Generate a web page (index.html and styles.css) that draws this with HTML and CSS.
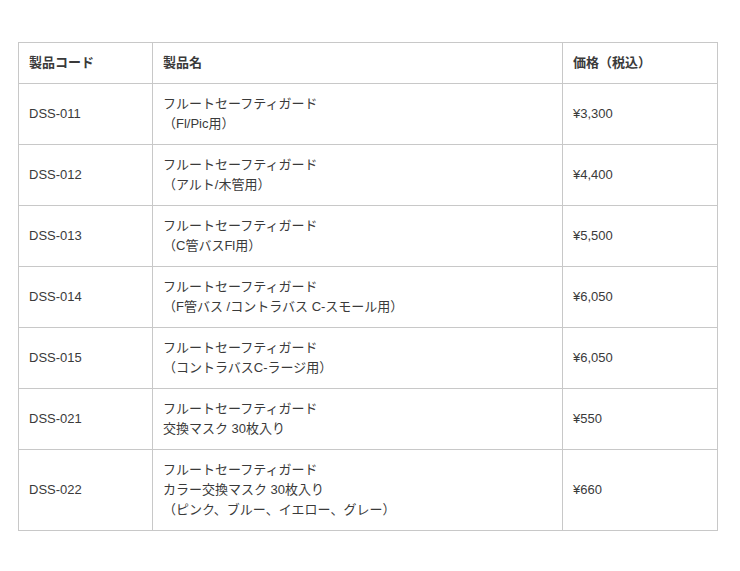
FILE: index.html
```html
<!DOCTYPE html>
<html lang="ja">
<head>
<meta charset="utf-8">
<link rel="stylesheet" href="styles.css">
</head>
<body>
<div class="wrap">
<table class="price-table">
  <colgroup><col class="c1"><col class="c2"><col class="c3"></colgroup>
  <thead>
    <tr><th>製品コード</th><th>製品名</th><th>価格（税込）</th></tr>
  </thead>
  <tbody>
    <tr><td>DSS-011</td><td>フルートセーフティガード<br>（Fl/Pic用）</td><td>¥3,300</td></tr>
    <tr><td>DSS-012</td><td>フルートセーフティガード<br>（アルト/木管用）</td><td>¥4,400</td></tr>
    <tr><td>DSS-013</td><td>フルートセーフティガード<br>（C管バスFl用）</td><td>¥5,500</td></tr>
    <tr><td>DSS-014</td><td>フルートセーフティガード<br>（F管バス /コントラバス C-スモール用）</td><td>¥6,050</td></tr>
    <tr><td>DSS-015</td><td>フルートセーフティガード<br>（コントラバスC-ラージ用）</td><td>¥6,050</td></tr>
    <tr><td>DSS-021</td><td>フルートセーフティガード<br>交換マスク 30枚入り</td><td>¥550</td></tr>
    <tr><td>DSS-022</td><td>フルートセーフティガード<br>カラー交換マスク 30枚入り<br>（ピンク、ブルー、イエロー、グレー）</td><td>¥660</td></tr>
  </tbody>
</table>
</div>
</body>
</html>
```
FILE: styles.css
```css
html, body { margin: 0; padding: 0; background: #fff; }
body {
  font-family: "Liberation Sans", Arial, "Noto Sans CJK JP", sans-serif;
  font-size: 13px;
  line-height: 20px;
  color: #3a3a3a;
}
.wrap { padding: 42px 0 0 18px; }
.price-table {
  border-collapse: collapse;
  width: 699px;
  table-layout: fixed;
}
.c1 { width: 134px; }
.c2 { width: 410px; }
.c3 { width: 155px; }
.price-table th, .price-table td {
  border: 1px solid #c8c8c8;
  padding: 10px 10px;
  text-align: left;
  vertical-align: middle;
}
.price-table th { font-weight: bold; }
```
